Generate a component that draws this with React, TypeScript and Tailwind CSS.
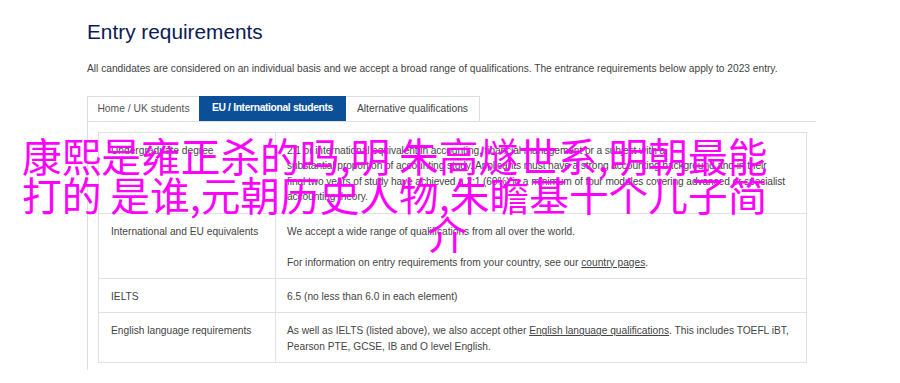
import React from "react";

export default function App() {
  return (
    <div className="relative w-[900px] h-[383px] overflow-hidden bg-white font-['Liberation_Sans',Arial,sans-serif] text-[#444]">
      <div className="pl-[87px] pt-[18px]">
        <h2 className="text-[20.8px] leading-[28px] text-[#0b1a55]">Entry requirements</h2>
        <p className="mt-[15px] text-[10.2px] leading-[15px] text-[#444]">
          All candidates are considered on an individual basis and we accept a broad range of qualifications. The entrance requirements below apply to 2023 entry.
        </p>
        <div className="mt-[20px] flex w-[729px] border-b border-[#dedede] text-[10.3px] leading-[24px]">
          <div className="w-[112px] border-l border-t border-[#dedede] text-center text-[#555]">Home / UK students</div>
          <div className="w-[147px] bg-[#0a4f98] text-center font-bold tracking-[-0.35px] text-white">EU / International students</div>
          <div className="w-[134px] border-r border-t border-[#dedede] text-center text-[#444]">Alternative qualifications</div>
        </div>
        <div className="w-[729px] border-l border-[#dedede] pl-[10px] pt-[10px] pb-[7px]">
          <table className="w-[709px] table-fixed border-collapse text-[10.2px] leading-[15.4px] text-[#444]">
            <tbody>
              <tr>
                <td className="w-[177px] border border-[#e2e2e2] px-[12px] pt-[10px] pb-[8px] align-top">Undergraduate degree</td>
                <td className="whitespace-nowrap border border-[#e2e2e2] px-[11px] pt-[10px] pb-[8px] align-top tracking-[-0.1px]">
                  2:1 or international equivalent in accounting, financial management or a subject with a
                  <br />
                  substantial proportion of accounting study. Applicants must have a strong accounting background and in their
                  <br />
                  final two years of study have achieved a 2:1 (60%) in a minimum of four modules covering advanced or specialist
                  <br />
                  accounting theory.
                </td>
              </tr>
              <tr>
                <td className="border border-[#e2e2e2] px-[12px] pt-[10px] pb-[8px] align-top">International and EU equivalents</td>
                <td className="border border-[#e2e2e2] px-[11px] pt-[10px] pb-[8px] align-top">
                  <p>We accept a wide range of qualifications from all over the world.</p>
                  <p className="mt-[15.6px]">
                    For information on entry requirements from your country, see our <span className="underline">country pages</span>.
                  </p>
                </td>
              </tr>
              <tr>
                <td className="border border-[#e2e2e2] px-[12px] pt-[10px] pb-[8px] align-top">IELTS</td>
                <td className="border border-[#e2e2e2] px-[11px] pt-[10px] pb-[8px] align-top">6.5 (no less than 6.0 in each element)</td>
              </tr>
              <tr>
                <td className="border border-[#e2e2e2] px-[12px] pt-[10px] pb-[8px] align-top">English language requirements</td>
                <td className="border border-[#e2e2e2] px-[11px] pt-[10px] pb-[8px] align-top">
                  As well as IELTS (listed above), we also accept other <span className="underline">English language qualifications</span>. This includes TOEFL iBT, Pearson PTE, GCSE, IB and O level English.
                </td>
              </tr>
            </tbody>
          </table>
        </div>
      </div>
      <div className="absolute left-[22px] top-[135px] w-[850px] font-['Noto_Sans_CJK_SC',sans-serif] text-[39.7px] leading-[39px] text-[#ff00ff]">
        <div className="whitespace-nowrap">康熙是雍正杀的吗,明 朱高燧世系,明朝最能</div>
        <div className="whitespace-nowrap">打的 是谁,元朝历史人物,朱瞻基十个儿子简</div>
        <div className="text-center">介</div>
      </div>
    </div>
  );
}
